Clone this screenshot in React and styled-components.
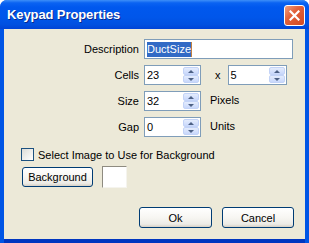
import React from 'react';
import styled, { createGlobalStyle } from 'styled-components';

const GlobalStyle = createGlobalStyle`
  html, body {
    margin: 0;
    padding: 0;
    background: #ffffff;
  }
  body {
    font-family: "Liberation Sans", Arial, sans-serif;
    font-size: 11px;
    color: #000000;
  }
`

const Window = styled.div`
  width: 309px;
  height: 243px;
  box-sizing: border-box;
  display: flex;
  flex-direction: column;
  border-radius: 7px 7px 0 0;
  overflow: hidden;
  background: #0055e5;
`

const TitleBar = styled.div`
  height: 29px;
  flex: none;
  display: flex;
  align-items: center;
  justify-content: space-between;
  padding: 0 4px 0 7px;
  box-sizing: border-box;
  background: linear-gradient(to bottom, #3d8ff8 0%, #0a63f2 10%, #0058ee 25%, #0056ea 60%, #0050e0 85%, #0043d6 100%);
`

const Title = styled.span`
  color: #ffffff;
  font-weight: bold;
  font-size: 13px;
  letter-spacing: -0.1px;
  text-shadow: 1px 1px 0 #0a2b8e;
  margin-top: -1px;
`

const CloseButton = styled.div`
  width: 21px;
  height: 21px;
  box-sizing: border-box;
  border: 1px solid #ffffff;
  border-radius: 3px;
  background: linear-gradient(135deg, #f0a080 0%, #e2613b 40%, #d24a22 100%);
  display: flex;
  align-items: center;
  justify-content: center;
  margin-top: 1px;
`

const Client = styled.div`
  flex: 1;
  margin: 0 4px 4px 4px;
  background: #ece9d8;
  display: flex;
  flex-direction: column;
  padding-top: 10px;
  box-shadow: 0 4px 0 #0036c0;
`

const Form = styled.div`
  display: flex;
  flex-direction: column;
  gap: 6px;
`

const Row = styled.div`
  display: flex;
  align-items: center;
  height: 20px;
`

const Label = styled.span`
  width: 140px;
  text-align: right;
  padding-right: 5px;
  box-sizing: border-box;
  flex: none;
`

const TextBox = styled.div`
  width: ${p => p.w}px;
  height: 20px;
  box-sizing: border-box;
  border: 1px solid #7f9db9;
  background: #ffffff;
  display: flex;
  align-items: center;
  padding-left: 2px;
  margin-left: ${p => p.ml || 0}px;
`

const Selected = styled.span`
  background: #316ac5;
  color: #ffffff;
  padding: 1px 0 2px 0;
  border-right: 1px solid #c08040;
`

const SpinBox = styled(TextBox)`
  justify-content: space-between;
  padding-right: 1px;
`

const Spin = styled.div`
  width: 16px;
  height: 16px;
  display: flex;
  flex-direction: column;
`

const SpinHalf = styled.div`
  flex: 1;
  box-sizing: border-box;
  border: 1px solid #c3d3f7;
  border-radius: 2px;
  background: linear-gradient(to bottom, #e4ecfd, #c8d7fb);
  display: flex;
  align-items: center;
  justify-content: center;
`

const Arrow = styled.div`
  width: 0;
  height: 0;
  border-left: 3px solid transparent;
  border-right: 3px solid transparent;
  ${p => p.up ? 'border-bottom: 3px solid #4d6185;' : 'border-top: 3px solid #4d6185;'}
`

const Unit = styled.span`
  margin-left: ${p => p.ml}px;
  margin-top: ${p => p.mt || 0}px;
`

const CheckRow = styled.div`
  display: flex;
  align-items: center;
  margin: 11px 0 0 17px;
  gap: 4px;
`

const CheckBox = styled.div`
  width: 13px;
  height: 13px;
  box-sizing: border-box;
  border: 1px solid #1c5180;
  background: linear-gradient(135deg, #dcdcd7, #ffffff);
`

const BgRow = styled.div`
  display: flex;
  align-items: center;
  margin: 5px 0 0 18px;
  gap: 9px;
`

const Button = styled.div`
  width: ${p => p.w}px;
  height: ${p => p.h || 21}px;
  box-sizing: border-box;
  border: 1px solid #003c74;
  border-radius: 3px;
  background: linear-gradient(to bottom, #ffffff 0%, #f7f6f2 50%, #ecebe6 85%, #d6d0c5 100%);
  display: flex;
  align-items: center;
  justify-content: center;
`

const Swatch = styled.div`
  width: 25px;
  height: 22px;
  box-sizing: border-box;
  border: 1px solid;
  border-color: #8e8b80 #f5f4ee #f5f4ee #8e8b80;
  background: #ffffff;
`

const Footer = styled.div`
  display: flex;
  justify-content: flex-end;
  gap: 10px;
  margin-top: 19px;
  padding-right: 11px;
`

const Spinner = ({ w, value, ml }) => (
  <SpinBox w={w} ml={ml}>
    <span>{value}</span>
    <Spin>
      <SpinHalf><Arrow up /></SpinHalf>
      <SpinHalf><Arrow /></SpinHalf>
    </Spin>
  </SpinBox>
);

export default function App() {
  return (
    <>
      <GlobalStyle />
      <Window>
        <TitleBar>
          <Title>Keypad Properties</Title>
          <CloseButton>
            <svg width="11" height="11" viewBox="0 0 11 11">
              <path d="M1.5 1.5 L9.5 9.5 M9.5 1.5 L1.5 9.5" stroke="#ffffff" strokeWidth="2.2" strokeLinecap="square" />
            </svg>
          </CloseButton>
        </TitleBar>
        <Client>
          <Form>
            <Row>
              <Label>Description</Label>
              <TextBox w={149}><Selected>DuctSize</Selected></TextBox>
            </Row>
            <Row>
              <Label>Cells</Label>
              <Spinner w={57} value="23" />
              <Unit ml={14}>x</Unit>
              <Spinner w={59} value="5" ml={7} />
            </Row>
            <Row>
              <Label>Size</Label>
              <Spinner w={57} value="32" />
              <Unit ml={9} mt={-3}>Pixels</Unit>
            </Row>
            <Row>
              <Label>Gap</Label>
              <Spinner w={57} value="0" />
              <Unit ml={9} mt={-3}>Units</Unit>
            </Row>
          </Form>
          <CheckRow>
            <CheckBox />
            <span>Select Image to Use for Background</span>
          </CheckRow>
          <BgRow>
            <Button w={71} h={20}>Background</Button>
            <Swatch />
          </BgRow>
          <Footer>
            <Button w={73}>Ok</Button>
            <Button w={72}>Cancel</Button>
          </Footer>
        </Client>
      </Window>
    </>
  );
}
